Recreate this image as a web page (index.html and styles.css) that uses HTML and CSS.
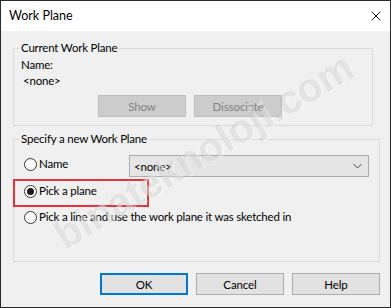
FILE: index.html
```html
<!DOCTYPE html>
<html>
<head>
<meta charset="utf-8">
<link rel="stylesheet" href="styles.css">
</head>
<body>
<div class="window">
  <div class="titlebar">
    <span class="title">Work Plane</span>
    <svg class="close" width="10" height="10" viewBox="0 0 10 10"><path d="M0.5 0.5 L9.5 9.5 M9.5 0.5 L0.5 9.5" stroke="#1a1a1a" stroke-width="1" fill="none"/></svg>
  </div>
  <div class="body">
    <section class="group g1">
      <div class="legend">Current Work Plane</div>
      <div class="g1-content">
        <div class="line">Name:</div>
        <div class="line indent">&lt;none&gt;</div>
        <div class="btnrow">
          <button class="btn disabled" disabled>Show</button>
          <button class="btn disabled" disabled>Dissociate</button>
        </div>
      </div>
    </section>
    <section class="group g2">
      <div class="legend">Specify a new Work Plane</div>
      <div class="g2-content">
        <div class="row row-name">
          <label class="radio"><span class="dot"></span><span class="rtext">Name</span></label>
          <div class="select"><span>&lt;none&gt;</span>
            <svg class="chev" width="9" height="6" viewBox="0 0 9 6"><path d="M0.5 1 L4.5 5 L8.5 1" stroke="#444" stroke-width="1" fill="none"/></svg>
          </div>
        </div>
        <div class="row row-plane highlight">
          <label class="radio"><span class="dot checked"></span><span class="rtext">Pick a plane</span></label>
        </div>
        <div class="row row-line">
          <label class="radio"><span class="dot"></span><span class="rtext">Pick a line and use the work plane it was sketched in</span></label>
        </div>
      </div>
    </section>
    <div class="actions">
      <button class="btn default">OK</button>
      <button class="btn">Cancel</button>
      <button class="btn">Help</button>
    </div>
  </div>
  <div class="watermark">binateknoloji.com</div>
</div>
</body>
</html>
```
FILE: styles.css
```css
* { box-sizing: border-box; }
html, body { margin: 0; padding: 0; }
body { background: #f0f0f0; }
.window {
  position: relative;
  width: 391px;
  height: 308px;
  border: 1px solid #2a2a2a;
  background: #f0f0f0;
  font-family: Lato, "Liberation Sans", sans-serif;
  font-size: 11.5px;
  letter-spacing: -0.2px;
  color: #000;
  overflow: hidden;
}
.titlebar {
  height: 30px;
  background: #fff;
  display: flex;
  align-items: center;
  justify-content: space-between;
  padding: 0 9px 0 8px;
}
.title { font-size: 12.5px; line-height: 16px; letter-spacing: 0; }
.close { display: block; }
.body {
  padding: 17px 0 0 12px;
  display: flex;
  flex-direction: column;
  align-items: flex-start;
}
.group {
  border: 1px solid #dcdcdc;
  padding: 0 0 0 5px;
  flex: none;
}
.legend {
  width: fit-content;
  margin-top: -8px;
  padding: 0 2px;
  line-height: 14px;
  height: 14px;
  background: #f0f0f0;
}
.g1 { width: 360px; height: 78px; }
.g1-content { padding: 2px 0 0 2px; }
.line { line-height: 16px; height: 16px; }
.indent { padding-left: 2px; }
.btnrow { display: flex; gap: 8px; margin-top: 6px; padding-left: 77px; }
.btn {
  width: 88px;
  height: 22px;
  font-family: inherit;
  font-size: 11.5px;
  letter-spacing: -0.1px;
  background: #e1e1e1;
  border: 1px solid #adadad;
  color: #000;
  padding: 0;
  margin: 0;
}
.btn.disabled { background: #cccccc; border-color: #bfbfbf; color: #838383; }
.btn.default { border: 2px solid #0078d7; }
.g2 { width: 367px; height: 123px; margin-top: 13px; }
.g2-content { padding: 9px 0 0 5px; display: flex; flex-direction: column; }
.row { display: flex; align-items: flex-start; }
.row-name { height: 22px; }
.row-name .radio { margin-top: 1px; width: 105px; }
.row-plane { margin-top: 6px; position: relative; }
.row-line { margin-top: 10px; }
.radio { display: flex; align-items: center; height: 16px; }
.dot {
  width: 13px; height: 13px;
  border: 1px solid #333;
  border-radius: 50%;
  background: #fff;
  display: flex; align-items: center; justify-content: center;
  margin-right: 2px;
  flex: none;
}
.dot.checked::after {
  content: "";
  width: 7px; height: 7px;
  border-radius: 50%;
  background: #1a1a1a;
}
.rtext { line-height: 16px; white-space: nowrap; }
.select {
  width: 240px; height: 22px;
  background: #e5e5e5;
  border: 1px solid #adadad;
  display: flex; align-items: center; justify-content: space-between;
  padding: 0 6px 0 4px;
}
.highlight::after {
  content: "";
  position: absolute;
  left: -11px; top: -4px;
  width: 132px; height: 24px;
  border: 2px solid #e8333b;
}
.actions {
  display: flex; gap: 8px;
  align-self: stretch;
  justify-content: flex-end;
  padding-right: 10px;
  margin-top: 11px;
}
.watermark {
  position: absolute;
  left: 203px; top: 150px;
  transform: translate(-50%, -50%) rotate(-31deg);
  font-family: "Liberation Sans", sans-serif;
  font-weight: bold;
  font-size: 40px;
  letter-spacing: 0;
  color: rgba(120, 120, 120, 0.16);
  text-shadow: 1px 1px 0 rgba(255,255,255,0.5);
  white-space: nowrap;
  pointer-events: none;
}
```
